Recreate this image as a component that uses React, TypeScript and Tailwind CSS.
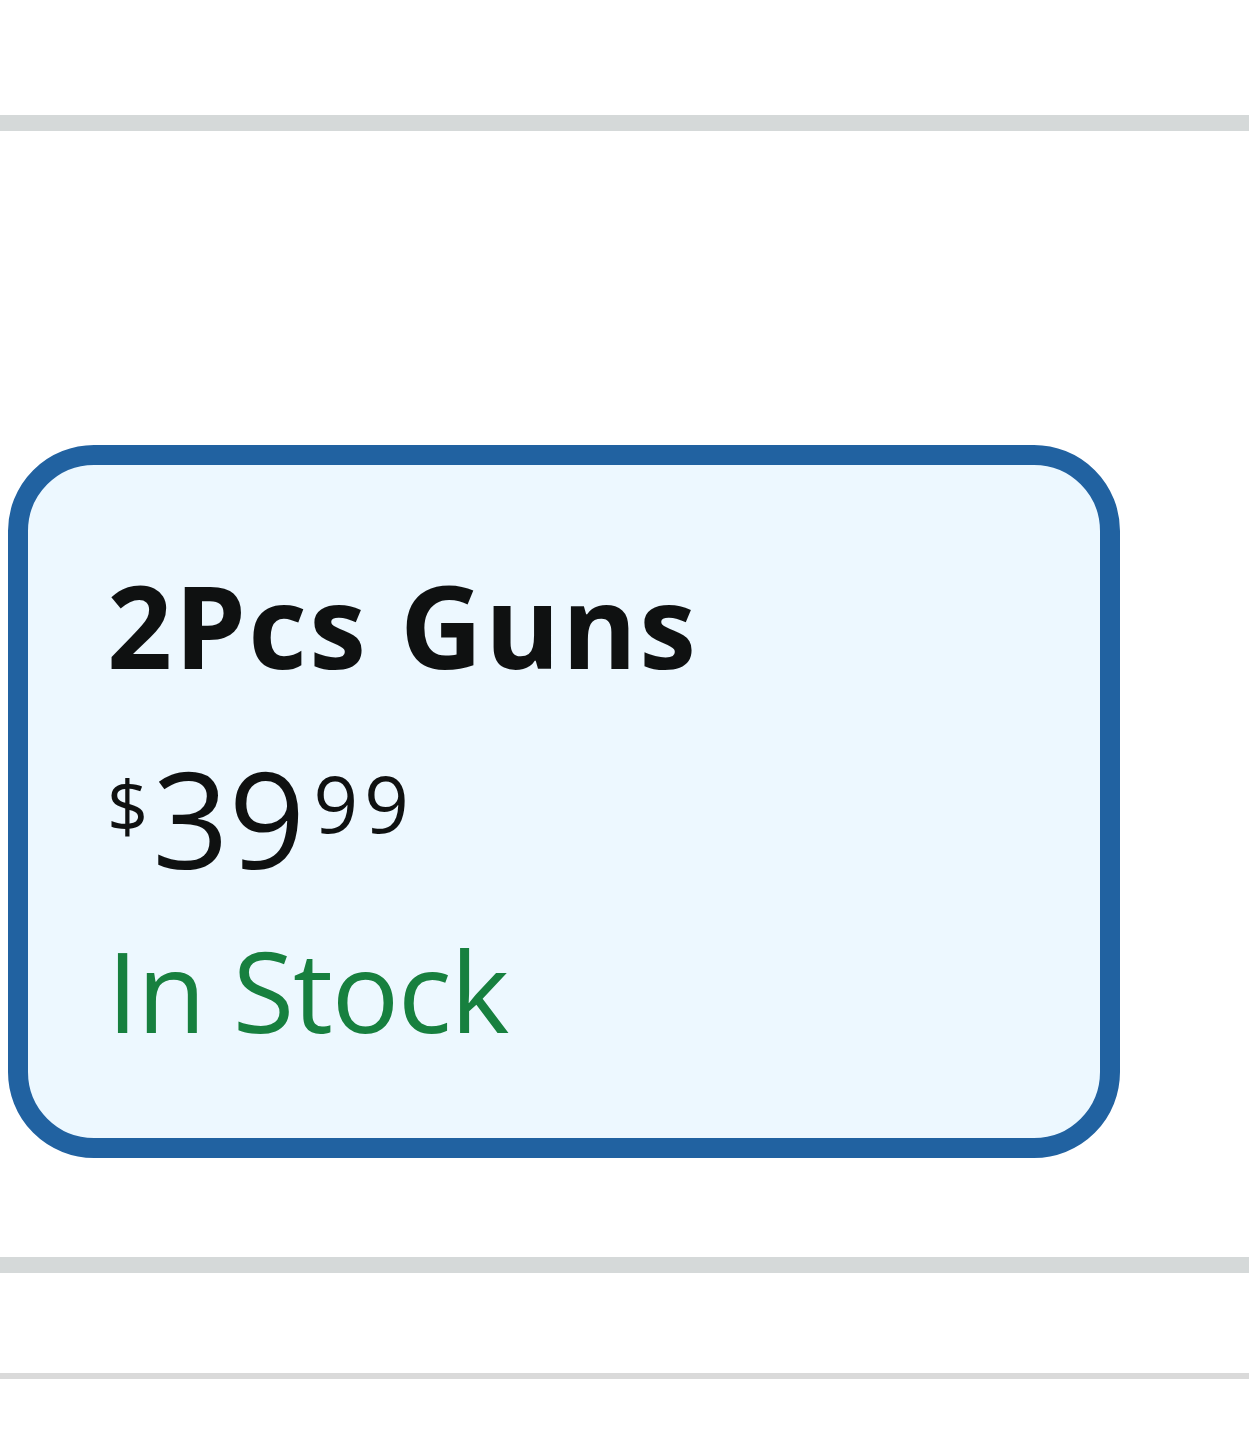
export default function App() {
  return (
    <div className="min-h-[1440px] w-full bg-white font-['Open_Sans',sans-serif]">
      <div className="h-[115px]" />
      <div className="h-[16px] bg-[#d5d9d9]" />
      <div className="h-[314px]" />

      <div className="ml-[8px] box-border h-[713px] w-[1112px] rounded-[86px] border-[20px] border-[#2162a1] bg-[#edf8ff] pl-[79px] pt-[103px]">
        <div className="flex flex-col">
          <h2 className="text-[114px] font-bold leading-none tracking-[0.02em] text-[#0f1111]">2Pcs Guns</h2>

          <div className="mt-[68px] flex items-start text-[#0f1111]">
            <span className="mt-[18px] text-[72px] leading-none">$</span>
            <span className="ml-[4px] text-[134px] leading-none">39</span>
            <span className="ml-[8px] mt-[14px] text-[78px] leading-none tracking-[0.08em]">99</span>
          </div>

          <p className="mt-[50px] text-[112px] leading-none tracking-[-0.01em] text-[#17803f]">In Stock</p>
        </div>
      </div>

      <div className="h-[99px]" />
      <div className="h-[16px] bg-[#d5d9d9]" />
      <div className="h-[100px]" />
      <div className="h-[6px] bg-[#dadada]" />
    </div>
  );
}
